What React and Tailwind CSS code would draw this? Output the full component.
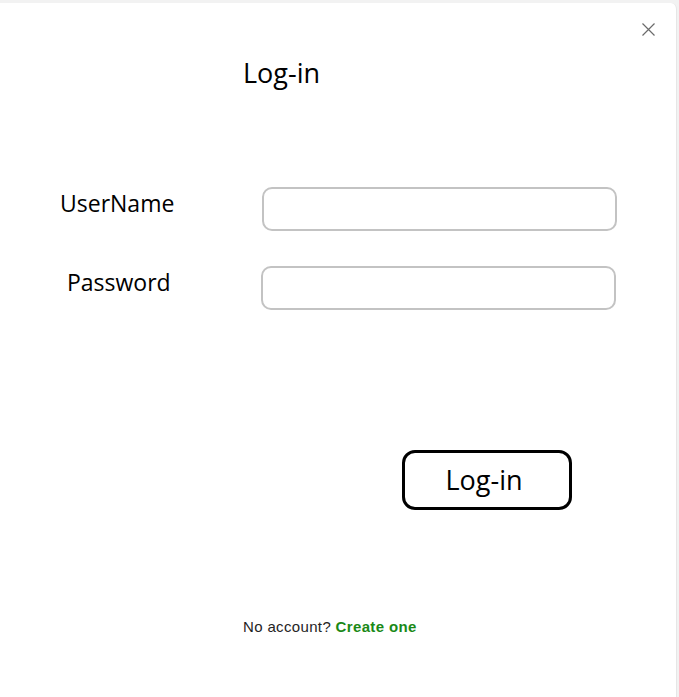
export default function App() {
  return (
    <div className="min-h-screen bg-[#f2f2f2] pt-[3px]" style={{ fontFamily: '"Open Sans", "Noto Sans", sans-serif' }}>
      <div className="relative h-[694px] w-[677px] rounded-tr-[6px] border-r border-[#e6e6e6] bg-white">
        <button className="absolute right-[21px] top-[20px] flex h-[13px] w-[13px] items-center justify-center text-[#6b6b6b]" aria-label="Close">
          <svg width="13" height="13" viewBox="0 0 13 13" fill="none" stroke="currentColor" strokeWidth="1.2">
            <path d="M0.5 0.5 L12.5 12.5 M12.5 0.5 L0.5 12.5" />
          </svg>
        </button>
        <div className="pl-[243px] pt-[52px]">
          <h1 className="text-[27px] leading-[36px] text-black">Log-in</h1>
        </div>
        <div className="mt-[96px] flex flex-col gap-[35px]">
          <div className="flex items-start">
            <div className="w-[262px] pl-[60px] pt-[1px] text-[23px] leading-[30px] text-black">UserName</div>
            <input className="h-[44px] w-[355px] rounded-[10px] border-2 border-[#c3c3c3] bg-white outline-none" />
          </div>
          <div className="flex items-start">
            <div className="w-[262px] pl-[67px] pt-[1px] text-[23px] leading-[30px] text-black">Password</div>
            <input type="password" className="-ml-px h-[44px] w-[355px] rounded-[10px] border-2 border-[#c3c3c3] bg-white outline-none" />
          </div>
        </div>
        <div className="mt-[140px] pl-[402px]">
          <button className="flex h-[60px] w-[170px] items-center justify-center rounded-[13px] border-[3px] border-black bg-white pr-[6px] text-[27px] text-black">
            Log-in
          </button>
        </div>
        <div className="mt-[106px] pl-[243px] text-[15px] tracking-[0.35px] text-[#242424]" style={{ fontFamily: '"Liberation Sans", Arial, sans-serif' }}>
          No account? <a className="font-bold text-[#1a8917]" href="#">Create one</a>
        </div>
      </div>
    </div>
  );
}
